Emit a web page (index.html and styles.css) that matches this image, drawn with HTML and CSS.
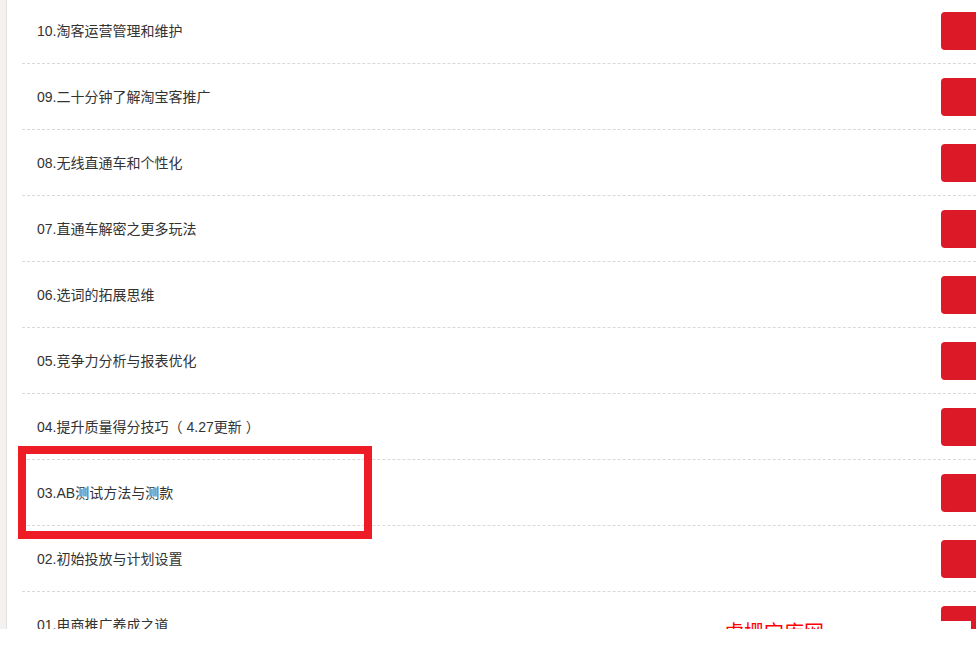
FILE: index.html
```html
<!DOCTYPE html>
<html lang="zh-CN">
<head>
<meta charset="utf-8">
<title>课程目录</title>
<link rel="stylesheet" href="styles.css">
</head>
<body>
<div class="frame">
  <div class="sidebar"></div>
  <ul class="lessons">
    <li class="lesson"><span class="title">10.淘客运营管理和维护</span><span class="btn"></span></li>
    <li class="lesson"><span class="title">09.二十分钟了解淘宝客推广</span><span class="btn"></span></li>
    <li class="lesson"><span class="title">08.无线直通车和个性化</span><span class="btn"></span></li>
    <li class="lesson"><span class="title">07.直通车解密之更多玩法</span><span class="btn"></span></li>
    <li class="lesson"><span class="title">06.选词的拓展思维</span><span class="btn"></span></li>
    <li class="lesson"><span class="title">05.竞争力分析与报表优化</span><span class="btn"></span></li>
    <li class="lesson"><span class="title">04.提升质量得分技巧（<span class="inner">4.27更新</span>）</span><span class="btn"></span></li>
    <li class="lesson"><span class="title">03.AB<span class="cjk">测试方法与测款</span></span><span class="btn"></span></li>
    <li class="lesson"><span class="title">02.初始投放与计划设置</span><span class="btn"></span></li>
    <li class="lesson"><span class="title">01.电商推广养成之道</span><span class="btn"></span></li>
  </ul>
  <div class="highlight"></div>
  <div class="watermark">虎栅宝库网</div>
  <div class="mask"></div>
</div>
</body>
</html>
```
FILE: styles.css
```css
html, body {
  margin: 0;
  padding: 0;
  background: #ffffff;
  overflow: hidden;
}
body {
  width: 976px;
  height: 652px;
  font-family: "Liberation Sans", "Noto Sans CJK SC", sans-serif;
}
.frame {
  position: relative;
  height: 629px;
  overflow: hidden;
  display: flex;
  background: #ffffff;
}
.sidebar {
  flex: 0 0 6px;
  background: #f3f2f1;
  border-right: 1px solid #e2e1df;
}
.lessons {
  list-style: none;
  margin: -2px 0 0 15px;
  padding: 0;
  flex: 0 0 1009px;
}
.lesson {
  height: 65px;
  border-bottom: 1px dashed #d9d9d9;
  display: flex;
  align-items: center;
  justify-content: space-between;
  padding-left: 15px;
}
.title {
  font-size: 14px;
  color: #333333;
  line-height: 20px;
}
.cjk {
  font-family: "Noto Sans CJK SC", sans-serif;
  color: #333333;
}
.inner {
  padding: 0 4px;
}
.btn {
  width: 90px;
  height: 38px;
  border-radius: 4px;
  background: #dc1a27;
}
.highlight {
  position: absolute;
  left: 18px;
  top: 446px;
  width: 338px;
  height: 77px;
  border: 8px solid #ee1c25;
}
.watermark {
  position: absolute;
  left: 724px;
  top: 620px;
  font-size: 20px;
  line-height: 24px;
  color: #ff0000;
  font-family: "Noto Sans CJK SC", sans-serif;
}
.mask {
  position: absolute;
  left: 941px;
  top: 621px;
  width: 30px;
  height: 8px;
  background: #ffffff;
}
```
